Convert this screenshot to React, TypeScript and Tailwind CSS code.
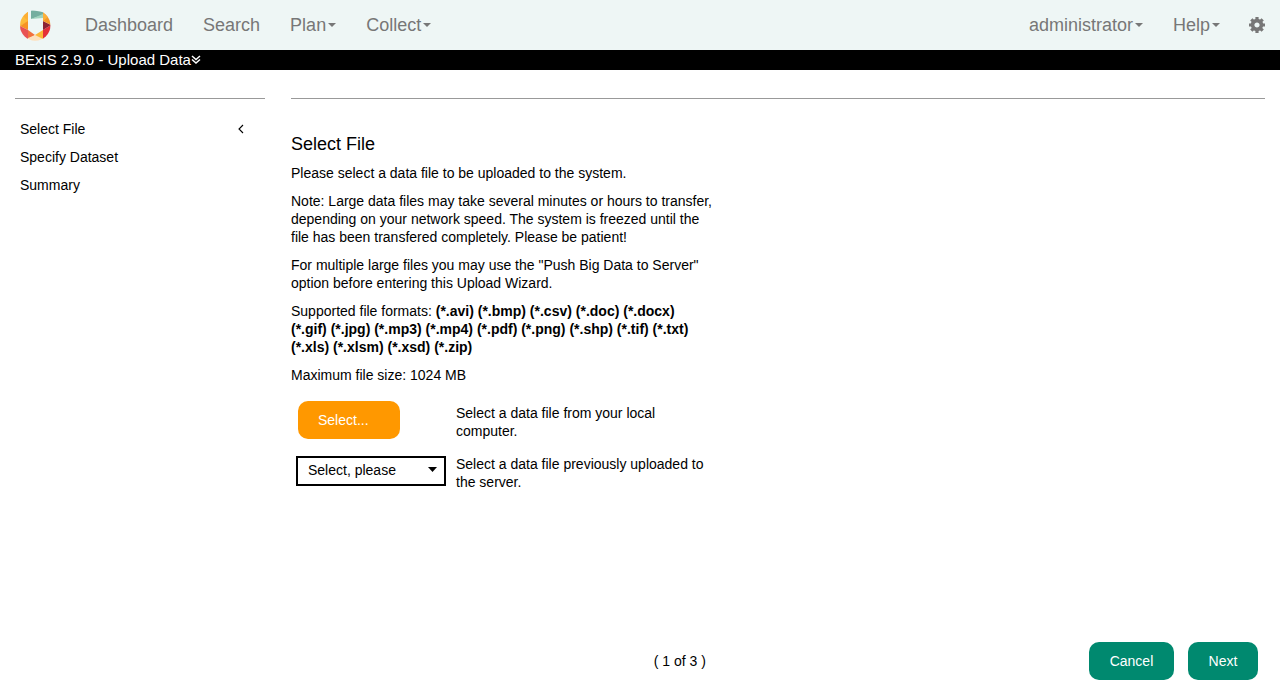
import React from "react";

function Logo() {
  return (
    <svg viewBox="0 0 31 31" className="size-[31px]" aria-hidden="true">
      <defs>
        <clipPath id="ring">
          <circle cx="15.2" cy="15.5" r="15.2" />
        </clipPath>
      </defs>
      <g clipPath="url(#ring)">
        <path d="M11 0L23 2V5L11 9Z" fill="#74ae9f" />
        <path d="M23 4L11 9L23 8Z" fill="#9fd3bd" />
        <path d="M8 0V12L0 16V0Z" fill="#fdbc3b" />
        <path d="M8 1V11L3 6Z" fill="#fcae35" />
        <path d="M8 11V20L0 16Z" fill="#f79323" />
        <path d="M0 16L8 20V31H0Z" fill="#e85254" />
        <path d="M8 20L15 25L8 29Z" fill="#f2703d" />
        <path d="M8 28L15.5 25L23 28V31H8Z" fill="#fde0bd" />
        <path d="M23 20V29L15 25Z" fill="#fcb736" />
        <path d="M23 20L31 15V31H23Z" fill="#e42f38" />
        <path d="M23 11L31 15L23 20Z" fill="#8d2334" />
        <path d="M23 0H31V15L23 11Z" fill="#f69728" />
        <path d="M23 2L28 7L23 11Z" fill="#fbb03a" />
      </g>
    </svg>
  );
}

function Gear() {
  return (
    <svg viewBox="-8 -8 16 16" className="size-4" fill="none" stroke="currentColor" aria-hidden="true">
      <circle r="4.400" strokeWidth="3.6" />
      <path d="M0 -8V-5M0 8V5M-8 0H-5M8 0H5M-5.700 -5.700L-3.600 -3.600M5.700 5.700L3.600 3.600M-5.700 5.700L-3.600 3.600M5.700 -5.700L3.600 -3.600" strokeWidth="3.2" />
    </svg>
  );
}

function Caret({ className = "" }: { className?: string }) {
  return (
    <svg viewBox="0 0 8 4" className={"h-1 w-2 " + className} aria-hidden="true">
      <path d="M0 0H8L4 4Z" fill="currentColor" />
    </svg>
  );
}

function NavLink({ label, menu = false }: { label: string; menu?: boolean }) {
  return (
    <a href="#" className="flex items-center px-[15px] py-[15px] text-lg leading-5">
      {label}
      {menu && <Caret className="ml-0.5" />}
    </a>
  );
}

const formats =
  "(*.avi) (*.bmp) (*.csv) (*.doc) (*.docx) (*.gif) (*.jpg) (*.mp3) (*.mp4) (*.pdf) (*.png) (*.shp) (*.tif) (*.txt) (*.xls) (*.xlsm) (*.xsd) (*.zip)";

export default function App() {
  return (
    <div className="flex min-h-screen flex-col bg-white font-['Liberation_Sans',Arial,sans-serif] text-[14px] leading-[18px] text-black">
      <nav className="flex h-[50px] items-center justify-between bg-[#eef6f5] text-[#777777]">
        <div className="flex items-center">
          <a href="#" aria-label="Home" className="pl-5 pr-[19px]">
            <Logo />
          </a>
          <NavLink label="Dashboard" />
          <NavLink label="Search" />
          <NavLink label="Plan" menu />
          <NavLink label="Collect" menu />
        </div>
        <div className="flex items-center">
          <NavLink label="administrator" menu />
          <NavLink label="Help" menu />
          <a href="#" aria-label="Settings" className="pl-3.5 pr-[15px]">
            <Gear />
          </a>
        </div>
      </nav>

      <header className="flex h-5 items-center bg-black px-[15px] text-[15px] text-white">
        <span>BExIS 2.9.0 - Upload Data</span>
        <svg viewBox="0 0 10 10" className="size-2.5" fill="none" stroke="currentColor" strokeWidth="1.5" aria-hidden="true">
          <path d="M1 1L5 4.5L9 1M1 4.500L5 8L9 4.500" />
        </svg>
      </header>

      <div className="flex flex-1 gap-[26px] px-[15px] pt-7">
        <aside className="w-[250px] shrink-0 border-t border-[#999999] pt-[21px]">
          <ol className="flex flex-col gap-2.5 pl-[5px] pr-5">
            <li className="flex items-center justify-between">
              <a href="#">Select File</a>
              <svg viewBox="0 0 8 10" className="h-2.5 w-2" fill="none" stroke="currentColor" strokeWidth="1.1" aria-hidden="true">
                <path d="M6 1L2 5L6 9" />
              </svg>
            </li>
            <li>
              <a href="#">Specify Dataset</a>
            </li>
            <li>
              <a href="#">Summary</a>
            </li>
          </ol>
        </aside>

        <main className="flex flex-1 flex-col border-t border-[#999999] pt-[35px]">
          <h1 className="text-lg leading-5">Select File</h1>
          <div className="mt-2.5 flex max-w-[422px] flex-col gap-2.5">
            <p>Please select a data file to be uploaded to the system.</p>
            <p>
              Note: Large data files may take several minutes or hours to transfer, depending on your network speed. The
              system is freezed until the file has been transfered completely. Please be patient!
            </p>
            <p>
              For multiple large files you may use the "Push Big Data to Server" option before entering this Upload
              Wizard.
            </p>
            <p>
              Supported file formats: <b>{formats}</b>
            </p>
            <p>Maximum file size: 1024 MB</p>
          </div>

          <div className="mt-[17px] grid grid-cols-[150px_256px] gap-x-2.5 gap-y-[15px] pl-[5px]">
            <div className="pl-0.5">
              <button type="button" className="h-[38px] w-[102px] rounded-[10px] bg-[#ff9800] px-5 text-left text-white">
                Select...
              </button>
            </div>
            <p className="pt-[3px]">Select a data file from your local computer.</p>
            <div className="relative pt-px">
              <select
                id="server-file"
                aria-labelledby="server-file-label"
                className="h-[30px] w-full appearance-none border-2 border-black bg-white pb-0.5 pl-2.5 pr-6"
              >
                <option>Select, please</option>
              </select>
              <svg viewBox="0 0 9 5" className="pointer-events-none absolute right-[9px] top-3 h-[5px] w-[9px]" aria-hidden="true">
                <path d="M0 0H9L4.500 5Z" fill="currentColor" />
              </svg>
            </div>
            <label id="server-file-label" htmlFor="server-file">
              Select a data file previously uploaded to the server.
            </label>
          </div>

          <footer className="mt-auto grid grid-cols-3 items-center pb-3.5">
            <span className="col-start-2 pl-[38px]">( 1 of 3 )</span>
            <div className="flex justify-end gap-3.5 pr-[7px]">
              <button type="button" className="h-[38px] w-[85px] rounded-[10px] bg-[#00896f] text-white">
                Cancel
              </button>
              <button type="button" className="h-[38px] w-[70px] rounded-[10px] bg-[#00896f] text-white">
                Next
              </button>
            </div>
          </footer>
        </main>
      </div>
    </div>
  );
}
